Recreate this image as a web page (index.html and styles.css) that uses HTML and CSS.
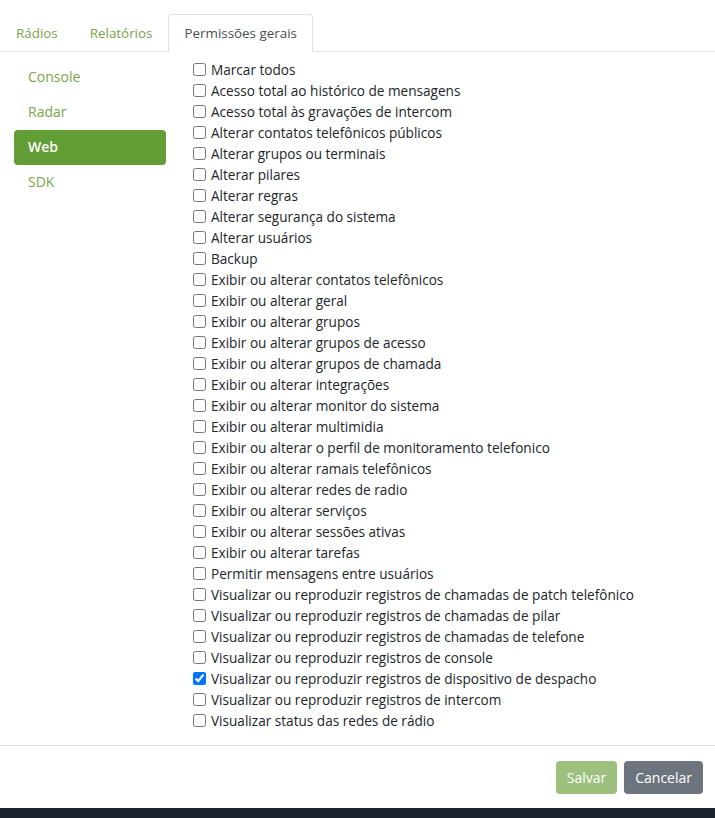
FILE: index.html
```html
<!DOCTYPE html>
<html lang="pt">
<head>
<meta charset="utf-8">
<link rel="stylesheet" href="styles.css">
</head>
<body>
<div class="modal">
  <ul class="tabs">
    <li class="tab">Rádios</li>
    <li class="tab">Relatórios</li>
    <li class="tab active">Permissões gerais</li>
  </ul>
  <div class="content">
    <ul class="nav">
      <li class="nav-item">Console</li>
      <li class="nav-item">Radar</li>
      <li class="nav-item active">Web</li>
      <li class="nav-item">SDK</li>
    </ul>
    <ul class="perms">
      <li><label><input type="checkbox"> Marcar todos</label></li>
      <li><label><input type="checkbox"> Acesso total ao histórico de mensagens</label></li>
      <li><label><input type="checkbox"> Acesso total às gravações de intercom</label></li>
      <li><label><input type="checkbox"> Alterar contatos telefônicos públicos</label></li>
      <li><label><input type="checkbox"> Alterar grupos ou terminais</label></li>
      <li><label><input type="checkbox"> Alterar pilares</label></li>
      <li><label><input type="checkbox"> Alterar regras</label></li>
      <li><label><input type="checkbox"> Alterar segurança do sistema</label></li>
      <li><label><input type="checkbox"> Alterar usuários</label></li>
      <li><label><input type="checkbox"> Backup</label></li>
      <li><label><input type="checkbox"> Exibir ou alterar contatos telefônicos</label></li>
      <li><label><input type="checkbox"> Exibir ou alterar geral</label></li>
      <li><label><input type="checkbox"> Exibir ou alterar grupos</label></li>
      <li><label><input type="checkbox"> Exibir ou alterar grupos de acesso</label></li>
      <li><label><input type="checkbox"> Exibir ou alterar grupos de chamada</label></li>
      <li><label><input type="checkbox"> Exibir ou alterar integrações</label></li>
      <li><label><input type="checkbox"> Exibir ou alterar monitor do sistema</label></li>
      <li><label><input type="checkbox"> Exibir ou alterar multimidia</label></li>
      <li><label><input type="checkbox"> Exibir ou alterar o perfil de monitoramento telefonico</label></li>
      <li><label><input type="checkbox"> Exibir ou alterar ramais telefônicos</label></li>
      <li><label><input type="checkbox"> Exibir ou alterar redes de radio</label></li>
      <li><label><input type="checkbox"> Exibir ou alterar serviços</label></li>
      <li><label><input type="checkbox"> Exibir ou alterar sessões ativas</label></li>
      <li><label><input type="checkbox"> Exibir ou alterar tarefas</label></li>
      <li><label><input type="checkbox"> Permitir mensagens entre usuários</label></li>
      <li><label><input type="checkbox"> Visualizar ou reproduzir registros de chamadas de patch telefônico</label></li>
      <li><label><input type="checkbox"> Visualizar ou reproduzir registros de chamadas de pilar</label></li>
      <li><label><input type="checkbox"> Visualizar ou reproduzir registros de chamadas de telefone</label></li>
      <li><label><input type="checkbox"> Visualizar ou reproduzir registros de console</label></li>
      <li><label><input type="checkbox" checked> Visualizar ou reproduzir registros de dispositivo de despacho</label></li>
      <li><label><input type="checkbox"> Visualizar ou reproduzir registros de intercom</label></li>
      <li><label><input type="checkbox"> Visualizar status das redes de rádio</label></li>
    </ul>
  </div>
  <div class="footer">
    <button class="btn btn-save" disabled>Salvar</button>
    <button class="btn btn-cancel">Cancelar</button>
  </div>
</div>
<div class="backdrop"></div>
</body>
</html>
```
FILE: styles.css
```css
html, body {
  margin: 0;
  padding: 0;
  background: #ffffff;
  font-family: "Open Sans", "Noto Sans", sans-serif;
  font-size: 13.6px;
  color: #212529;
}
ul { list-style: none; margin: 0; padding: 0; }
.modal {
  height: 808px;
  display: flex;
  flex-direction: column;
  background: #fff;
}
.tabs {
  display: flex;
  padding-top: 14px;
  border-bottom: 1px solid #dee2e6;
}
.tab {
  height: 36px;
  line-height: 36px;
  padding: 0 15px;
  color: #7aa34a;
  font-size: 13.4px;
  border: 1px solid transparent;
  border-bottom: none;
  border-radius: 4px 4px 0 0;
  margin-bottom: -1px;
}
.tab:first-child { padding-left: 15px; }
.tab.active {
  color: #495057;
  border-color: #dee2e6;
  background: #fff;
  height: 37px;
}
.content {
  display: flex;
  padding: 8px 0 0 14px;
  flex: 1;
}
.nav {
  width: 152px;
  flex: none;
}
.nav-item {
  height: 35px;
  line-height: 34px;
  padding: 0 14px;
  color: #7aa34a;
  font-size: 14px;
  border-radius: 4px;
}
.nav-item.active {
  background: #629e35;
  color: #fff;
  font-weight: 600;
}
.perms {
  margin-left: 23px;
  margin-top: -1px;
}
.perms li {
  height: 21px;
  line-height: 21px;
}
.perms label {
  display: flex;
  align-items: center;
  white-space: nowrap;
}
.perms input {
  margin: 0 5px 0 4px;
  width: 13px;
  height: 13px;
}
.footer {
  border-top: 1px solid #dee2e6;
  height: 62px;
  display: flex;
  justify-content: flex-end;
  align-items: center;
  gap: 7px;
  padding-right: 12px;
}
.btn {
  font-family: inherit;
  font-size: 14px;
  height: 33px;
  padding: 0 11px;
  border: none;
  border-radius: 4px;
  color: #fff;
}
.btn-save { background: #9dc07f; }
.btn-cancel { background: #6c757d; }
.backdrop {
  height: 10px;
  background: #1c2330;
}
```
